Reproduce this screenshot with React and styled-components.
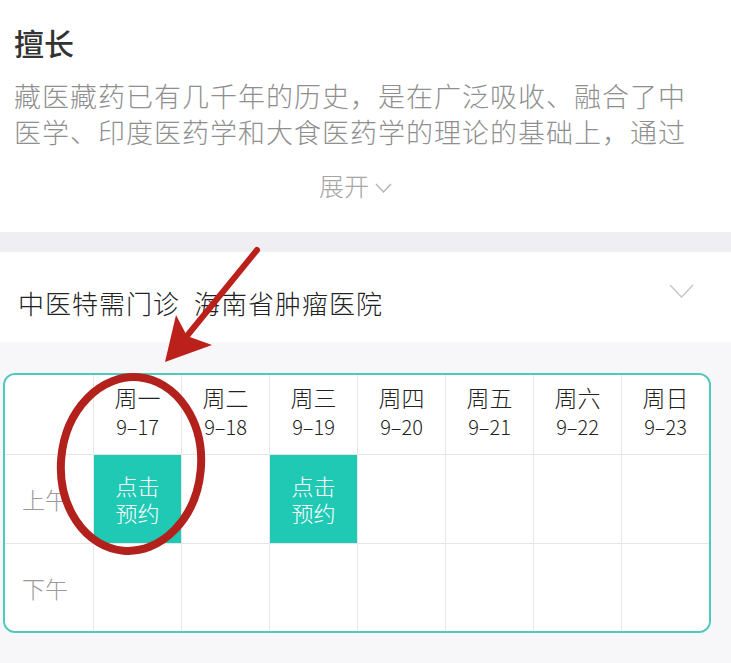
import React from 'react'
import styled, { createGlobalStyle } from 'styled-components'

const GlobalStyle = createGlobalStyle`
    body {
        margin: 0;
        background: #f7f7f9;
        font-family: "Noto Sans CJK SC", "Noto Sans", sans-serif;
    }
`

const Page = styled.div`
    position: relative;
    width: 731px;
    min-height: 663px;
    background: #f7f7f9;
    overflow: hidden;
`

const ExpertiseSection = styled.section`
    box-sizing: border-box;
    height: 232px;
    padding: 24px 14px 0;
    background: #fff;
`

const Title = styled.h2`
    margin: 0;
    font-size: 30px;
    line-height: 36px;
    font-weight: 500;
    color: #333;
`

const Intro = styled.p`
    margin: 18px 0 0;
    width: 676px;
    max-height: 72px;
    overflow: hidden;
    font-size: 27px;
    line-height: 36px;
    letter-spacing: 1px;
    font-weight: 300;
    color: #8f8f8f;
`

const ExpandToggle = styled.div`
    margin-top: 17px;
    padding-right: 20px;
    display: flex;
    justify-content: center;
    align-items: center;
    gap: 6px;
    font-size: 25px;
    line-height: 36px;
    font-weight: 300;
    color: #a6a6a6;
    svg {
        margin-top: 6px;
    }
`

const Band = styled.div`
    height: 20px;
    background: #efeff3;
`

const ClinicHeader = styled.div`
    box-sizing: border-box;
    height: 90px;
    padding: 10px 37px 0 18px;
    display: flex;
    align-items: center;
    justify-content: space-between;
    background: #fff;
    font-size: 26px;
    font-weight: 300;
    letter-spacing: 1px;
    color: #222;
    span + span {
        margin-left: 14px;
    }
    svg {
        margin-bottom: 22px;
    }
`

const ScheduleArea = styled.div`
    padding: 31px 20px 30px 3px;
`

const Table = styled.div`
    display: grid;
    grid-template-columns: 88px repeat(7, 1fr);
    grid-template-rows: 79px 88px 87px;
    gap: 1px;
    background: #e6e6e6;
    border: 2px solid #4fc9bd;
    border-radius: 12px;
    overflow: hidden;
`

const Cell = styled.div`
    display: flex;
    flex-direction: column;
    align-items: center;
    justify-content: center;
    font-weight: 300;
    background: ${p => (p.$booked ? '#1fc9b4' : '#fff')};
    color: ${p => (p.$booked ? '#fff' : '#222')};
`

const DayHeader = styled(Cell)`
    padding-bottom: 6px;
`

const DayName = styled.div`
    font-size: 23px;
    line-height: 30px;
`

const DayDate = styled.div`
    font-size: 20px;
    line-height: 30px;
`

const RowLabel = styled(Cell)`
    padding-right: 8px;
    font-size: 23px;
    color: #9a9a9a;
`

const BookText = styled.div`
    font-size: 22px;
    line-height: 27px;
    text-align: center;
`

const Annotation = styled.svg`
    position: absolute;
    top: 0;
    left: 0;
    pointer-events: none;
`

const days = [
    ['周一', '9–17'],
    ['周二', '9–18'],
    ['周三', '9–19'],
    ['周四', '9–20'],
    ['周五', '9–21'],
    ['周六', '9–22'],
    ['周日', '9–23'],
]

const morningOpen = [true, false, true, false, false, false, false]

const Chevron = ({ w, h, color, width }) => (
    <svg width={w} height={h} viewBox={`0 0 ${w} ${h}`}>
        <polyline points={`1,1 ${w / 2},${h - 1} ${w - 1},1`} fill="none" stroke={color} strokeWidth={width} />
    </svg>
)

const App = () => {
    return (
        <Page>
            <GlobalStyle />
            <ExpertiseSection>
                <Title>擅长</Title>
                <Intro>
                    藏医藏药已有几千年的历史，是在广泛吸收、融合了中医学、印度医药学和大食医药学的理论的基础上，通过长期实践所形成的独特医药体系。
                </Intro>
                <ExpandToggle>
                    展开
                    <Chevron w={17} h={10} color="#b8b8b8" width={1.5} />
                </ExpandToggle>
            </ExpertiseSection>
            <Band />
            <ClinicHeader>
                <div>
                    <span>中医特需门诊</span>
                    <span>海南省肿瘤医院</span>
                </div>
                <Chevron w={25} h={14} color="#c8c8c8" width={1.5} />
            </ClinicHeader>
            <ScheduleArea>
                <Table>
                    <Cell />
                    {days.map(([name, date]) => (
                        <DayHeader key={name}>
                            <DayName>{name}</DayName>
                            <DayDate>{date}</DayDate>
                        </DayHeader>
                    ))}
                    <RowLabel>上午</RowLabel>
                    {morningOpen.map((open, i) => (
                        <Cell key={'am' + i} $booked={open}>
                            {open && (
                                <BookText>
                                    点击
                                    <br />
                                    预约
                                </BookText>
                            )}
                        </Cell>
                    ))}
                    <RowLabel>下午</RowLabel>
                    {days.map(([name]) => (
                        <Cell key={'pm' + name} />
                    ))}
                </Table>
            </ScheduleArea>
            <Annotation width="731" height="663" viewBox="0 0 731 663">
                <line x1="257" y1="250" x2="182" y2="342" stroke="#bb201b" strokeWidth="6" strokeLinecap="round" />
                <polygon points="165,362 176,315 187,336 212,345" fill="#bb201b" />
                <ellipse
                    cx="131"
                    cy="464"
                    rx="70"
                    ry="87"
                    fill="none"
                    stroke="#b3211c"
                    strokeWidth="8"
                    transform="rotate(5 131 464)"
                />
            </Annotation>
        </Page>
    )
}

export default App
